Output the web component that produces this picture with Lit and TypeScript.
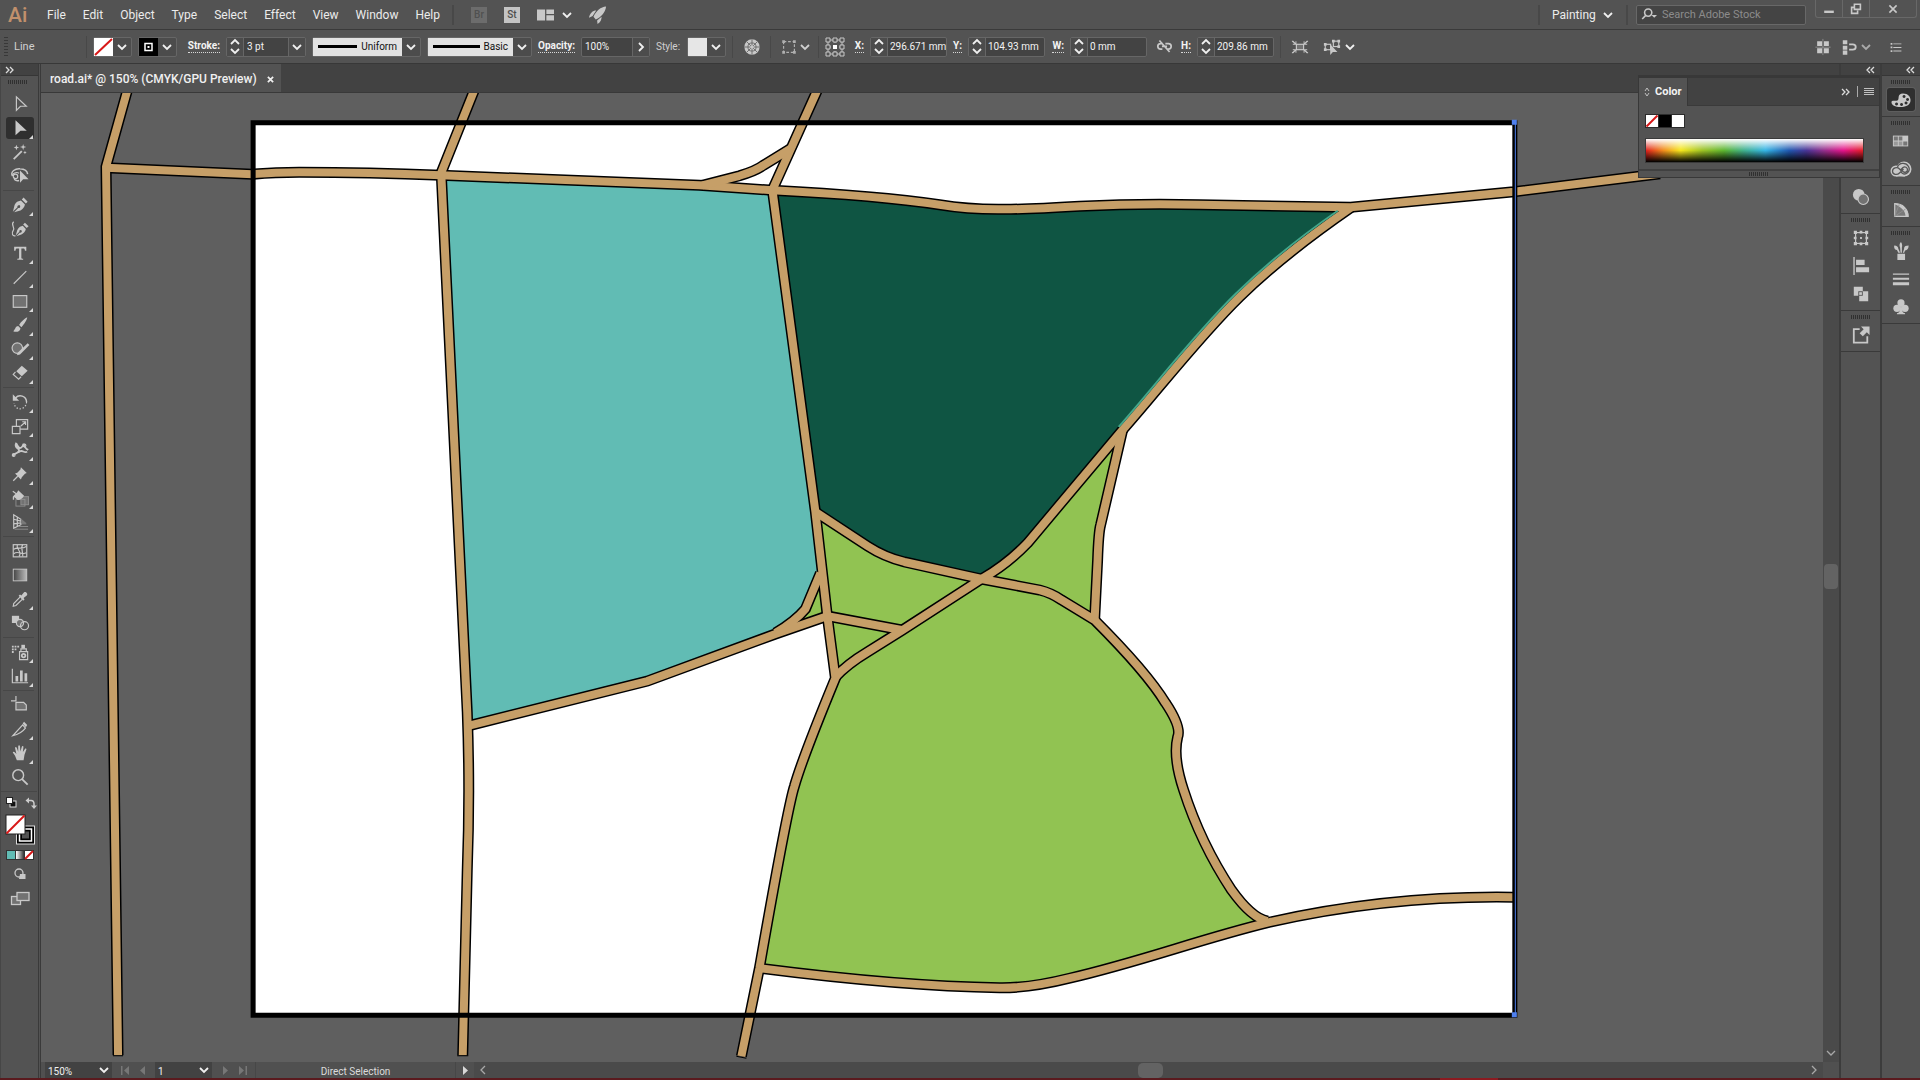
import { LitElement, html, css, svg, TemplateResult, SVGTemplateResult } from "lit";
import { customElement, property } from "lit/decorators.js";
import { classMap } from "lit/directives/class-map.js";

/* ---------- icon drawings, each on a 20 x 20 grid ---------- */

const ICONS: Record<string, SVGTemplateResult> = {
  select: svg`<path class="l" d="M6 2V17L10.500 12.500H17Z"/>`,
  direct: svg`<path class="f" d="M5 1.500V18L10.500 13H17.500Z"/>`,
  wand: svg`<path class="l w2" d="M3 18L12 9"/><path class="f" d="M6 2l.8 2.200L9 5l-2.200.8L6 8l-.8-2.200L3 5l2.200-.8ZM13.500 1l.8 2.700L17 4.500l-2.700.8L13.500 8l-.8-2.700L10 4.500l2.700-.8ZM15.500 8.500l.6 1.400 1.400.6-1.400.6-.6 1.400-.6-1.400-1.400-.6 1.400-.6Z"/>`,
  lasso: svg`<path class="l w15" d="M9 15C4 16 3 13 4.500 12M1.500 10C-1 5 5 1.500 10 2C14 2.200 18 4 18.500 8"/><path class="l" d="M2 10C1 7 6 5 9 7"/><circle class="l" cx="5" cy="10.500" r="2.500"/><path class="f" d="M10 4V17.500L13.500 13.500H19.500Z"/>`,
  pen: svg`<path class="f" d="M2 18L4 10C6 6 9 5.500 11 5L15.500 9.500C15 12 13.500 14.500 10.500 16L3.500 18L8 13.200A1.600 1.600 0 1 0 7.200 12.400L2.500 17Z"/><path class="f" d="M12 3.800L14 1.800L18.500 6.300L16.500 8.300Z"/>`,
  curvature: svg`<path class="f" d="M5 18L7 11C9 7.500 11 7 13 6.500L16.500 10C16 13 14 15 11.500 16L6 18L10 13.800A1.400 1.400 0 1 0 9.300 13L5.500 17Z"/><path class="f" d="M13.500 5L15.500 3L19.500 7L17.500 9Z"/><path class="l" d="M3 2C-1 5 5 8 2.500 11.500C0 15 2 18.500 5 17.500"/>`,
  type: svg`<path class="f" d="M3.500 3H17V7.500H15.500C15.300 5.500 15 5 13.500 5H11.500V15C11.500 16.300 12 16.500 13.500 16.500V17.500H7V16.500C8.500 16.500 9 16.300 9 15V5H7C5.500 5 5.200 5.500 5 7.500H3.500Z"/>`,
  line: svg`<path class="l" d="M3 17.500L17 3.500"/>`,
  rect: svg`<rect class="l m" x="2.500" y="4" width="15" height="13"/>`,
  brush: svg`<path class="f" d="M18 1.500C15 3 11 6.500 9 10L11.500 12.500C15 9 18 4 18 1.500ZM8 11C5 11 5 14.500 2.500 17C6 18.500 10.500 17 10.500 13.500Z"/>`,
  shaper: svg`<circle class="l m" cx="7" cy="9" r="5.800"/><path class="f" d="M18.500 3.500L20.500 5.500L10 16L6.500 17L8 13.500Z"/>`,
  eraser: svg`<path class="f" d="M12 2L18.500 7.500L12 13.500L5.800 8Z"/><path class="l" d="M5 8.800L2.500 11.500L8.500 16.800L11.200 14.200"/>`,
  rotate: svg`<path class="l w15" d="M5 5.500C9 1 17 3 17.300 10"/><path class="f" d="M2 1.500V8.500H9Z"/><path class="l dot" d="M17.300 10C17 16 12 18 9 17.500C6 17 3.500 14 3.500 11"/>`,
  scale: svg`<path class="l" d="M1.500 10.500H10V18.500H1.500ZM6 10V3H18.500V13.500H10.500"/><path class="l" d="M11 10L16 5.500M12.500 5.300H16.200V9"/>`,
  width: svg`<path class="l w2" d="M6 2C2 9 12 8 8 12C5 15 2 14 2 17M6 3C10 12 13 6 14 3C15 9 17 8 19 10M8 13C12 8 14 14 18 12"/><circle class="l" cx="3" cy="15.500" r="1.500"/><circle class="l" cx="15" cy="5" r="1.500"/>`,
  pin: svg`<path class="f" d="M11 2.500L17.500 9L15.500 9.800L12 13.500L11 16L4.500 9.500L7 8.500L10.500 5Z"/><path class="l" d="M7.500 12.500L2.500 17.500"/>`,
  builder: svg`<rect class="l dim m" x="11" y="8.500" width="8.500" height="9"/><rect class="l dim" x="5.500" y="11.500" width="10" height="7.500"/><path class="f" d="M2 8.500C4 6 7 5 8 1.500L14.500 7.500C13 10.500 9 13 7 12L3.500 9V12H2Z"/><path class="l" d="M2 2.500L7 6"/>`,
  perspective: svg`<path class="l" d="M3 2V17L11 13V7ZM3 7L11 9M3 12L11 11M7 4V15"/><path class="l dim" d="M11 12H17M8 15H19M4 18H19"/><path class="m" d="M11 6L17 11H11Z"/>`,
  mesh: svg`<rect class="l" x="2.500" y="3" width="15" height="13.500"/><path class="l" d="M3 8C8 5 11 9 17 5M3 13C8 9 12 15 17 12M7 3C5 8 13 10 9 16M13 3C10 7 14 11 13 16"/>`,
  gradient: svg`<defs><linearGradient id="gt"><stop stop-color="#444"/><stop offset="1" stop-color="#bbb"/></linearGradient></defs><rect x="2.500" y="3.500" width="15" height="13" fill="url(#gt)" stroke="#c8c8c8"/>`,
  eyedropper: svg`<path class="f" d="M10 5L11.500 6L14.500 2.500C16 1 19.500 4 17.500 6L14 9L15 10.500L13.500 12L8.500 6.500Z"/><path class="l" d="M10 8L3 15L2.500 18L5.500 17.200L12.500 10.500"/>`,
  blend: svg`<rect class="f" x="1" y="2" width="8" height="8"/><circle class="l m" cx="10" cy="10" r="4"/><circle class="l" cx="15" cy="13" r="4.500"/>`,
  spray: svg`<path class="l" d="M9.500 9.500H18.500V18.500H9.500ZM11 9V6.500H17V9"/><rect class="f" x="11.500" y="2" width="4" height="4"/><circle class="l w2" cx="14" cy="14" r="2"/><path class="f" d="M1 3h2v2H1zM4 3h2v2H4zM7 3h2v2H7zM1 6h2v2H1zM4 6h2v2H4zM1 9h2v2H1z"/>`,
  graph: svg`<path class="l" d="M1.500 2V17.500H19"/><path class="f" d="M5 10H8V16H5ZM10 4H13V16H10ZM15 7H18V16H15Z"/>`,
  artboard: svg`<path class="l" d="M5.500 0V6M0 5.500H5"/><path class="l m" d="M5.500 7H14L17 10V15.500H5.500Z"/>`,
  slice: svg`<path class="l" d="M2 17.500L13 5.500L16 9C13 13 8 16 2 17.500Z"/><path class="f" d="M13 4L14.500 2L18 5.500L16.500 8Z"/>`,
  hand: svg`<path class="f" d="M6.500 18L4.500 13L2 9.500C2 8 3.500 8.300 4.500 9.500L6 11L4.500 4.500C4.500 3 6 3 6.500 4.500L8 8.500L8 2.500C8.200 1 9.800 1 10 2.500L10.500 8.300L12 3C12.500 1.700 14 2 13.800 3.500L13.200 9L15.500 5.500C16.500 4.500 17.500 5.500 17 6.500L15 12L14 18Z"/>`,
  zoom: svg`<circle class="l w15" cx="8" cy="8" r="6"/><path class="l w2" d="M12 12L18.500 18.500"/>`,
  drawmode: svg`<circle class="l" cx="9" cy="9" r="4"/><path class="f" d="M10 10H15.500V15H9Z"/>`,
  screen: svg`<rect class="l m" x="1.500" y="8.500" width="9" height="8"/><rect class="l m" x="7" y="4.500" width="12" height="8"/>`,
  palette: svg`<path class="f" fill-rule="evenodd" d="M12 3.500C17 3.500 20 7 19.500 11C19 15.500 14 17 9.500 17C4.500 17 0 15 .5 12C1 9.500 5 12 7 10C8.500 8 6 4 12 3.500ZM13 5a1.500 1.500 0 1 0 .1 0ZM16.500 8a1.500 1.500 0 1 0 .1 0ZM15 11.500a1.500 1.500 0 1 0 .1 0ZM10.500 13a1.500 1.500 0 1 0 .1 0ZM5.500 12.500a1.500 1.500 0 1 0 .1 0Z"/>`,
  swatches: svg`<rect class="f" x="1" y="4" width="17" height="12"/><path fill="#777" d="M2 5h4.500v4.500H2zM7.500 5h4v4.500h-4zM12.500 10.500h4.500v4.500h-4.500z"/><path fill="#999" d="M2 10.500h4.500v4.500H2zM7.500 10.500h4v4.500h-4z"/>`,
  cloud: svg`<circle class="f" cx="5" cy="12" r="5.500"/><circle class="f" cx="13" cy="10" r="7.500"/><rect class="f" x="5" y="13" width="9" height="4.500"/><path fill="none" stroke="#555" stroke-width="1.300" d="M11 12.500L8.500 10C6 7.500 1.500 9 1.500 12.200C1.500 15.500 6 16.500 8.500 14L12.500 10M6.500 8C8 3.500 15 3 17.500 7.500C20 12 15 17 11 14L9.500 12.500M9.500 11L12 8.500C14 7 16.500 8.500 16.500 10.700C16.500 13 13.500 14 12 12.500L10 10.500"/>`,
  guide: svg`<path class="m" d="M3 3V17H18C18 9 12 3 3 3Z"/><path class="f" d="M3 3C12 3 18 9 18 17H15C15 12 12 8 3 3Z"/><path class="l" d="M3 3V17H18C18 9 12 3 3 3Z"/><path class="l dim" d="M3 17L8 4M3 17L15 9"/>`,
  brushes: svg`<path class="f" d="M6 13H14.500V20H6ZM9.500 12L9 6C7.500 3 9 1 10 0C11.500 2 11.500 4 11 6L11 12ZM7 12L5.500 9C3 8.500 2 6.500 2.500 4C5.500 4 7 5.500 7 7.500L9 12ZM12 12L13.500 7.500C13 5 15.500 4 18.500 4C18.500 7 17 9.500 14.500 9.500L13.500 12Z"/>`,
  strokes: svg`<path class="f" d="M1 4H19V5.200H1ZM1 8.500H19V10.800H1ZM1 13.500H19V17H1Z"/>`,
  club: svg`<circle class="f" cx="10" cy="5.500" r="4"/><circle class="f" cx="5.500" cy="11.500" r="4"/><circle class="f" cx="14.500" cy="11.500" r="4"/><path class="f" d="M9 9H11C11 15 12 16.500 14.500 17V18H5.500V17C8 16.500 9 15 9 9Z"/>`,
  transparency: svg`<circle class="f" cx="7.500" cy="7.500" r="6.500"/><circle class="l m" cx="12.500" cy="12.500" r="5.800"/>`,
  transform: svg`<rect class="l" x="4" y="4" width="12" height="12"/><path class="f" d="M2 2h3.500v3.500H2zM8.500 2h3v3h-3zM14.500 2H18v3.500h-3.500zM2 8.500h3v3H2zM15 8.500h3v3h-3zM2 14.500h3.500V18H2zM8.500 15h3v3h-3zM14.500 14.500H18V18h-3.500zM9 9h2v2H9z"/>`,
  align: svg`<path class="f" d="M1.500 0H3V20H1.500ZM4.500 3H14V9H4.500ZM4.500 11.500H19V17H4.500Z"/>`,
  pathfinder: svg`<path class="f" fill-rule="evenodd" d="M2 2H12V7H18V18H8V12H2ZM7 7V12H12V7Z"/><rect class="f" x="8" y="8" width="3" height="3"/>`,
  export: svg`<path class="l w2" d="M8.500 3.500H2V18.500H17V11.500"/><path class="f" d="M10 0.500H19.500V10L16.500 7L12 11.500L8.500 8L13 3.500Z"/>`,
  recolor: svg`<circle class="f" cx="10" cy="10" r="8.500"/><path fill="none" stroke="#666" d="M10 1.500V18.500M1.500 10H18.500M4 4L16 16M16 4L4 16"/><circle cx="10" cy="10" r="4.500" fill="none" stroke="#666"/><circle class="f" cx="10" cy="10" r="2"/>`,
  refpoint: svg`<g fill="none" stroke="#c8c8c8"><path d="M5 3H8M12 3H15M5 10H6M14 10H15M5 17H8M12 17H15M3 5V8M3 12V15M10 5V6M17 5V8M17 12V15M10 14V15"/><path d="M1 1h4v4H1zM8 1h4v4H8zM15 1h4v4h-4zM1 8h4v4H1zM15 8h4v4h-4zM1 15h4v4H1zM8 15h4v4H8zM15 15h4v4h-4z"/></g><rect x="8" y="8" width="4" height="4" fill="#fff"/>`,
  unlink: svg`<path class="l w2" d="M8 6.500H5.500C1 6.500 1 13 5.500 13H7.500M11 6.500H14.500C19 6.500 19 13 14.500 13H13M7 9.800H13M4 3L16 16.500"/>`,
  isolate: svg`<rect class="l m" x="6" y="7" width="8" height="6"/><path class="f" d="M1 3L5 7M1 3h1.500L5 5.500V3.500h1V7.500H2v-1H4L1 4ZM19 3h-1.500L15 5.500V3.500h-1V7.500H18v-1H16L19 4ZM1 17h1.500L5 14.500V16.500h1V12.500H2v1H4L1 16ZM19 17h-1.500L15 14.500V16.500h-1V12.500H18v1H16L19 16Z"/>`,
  similar: svg`<rect class="l" x="2.500" y="7" width="6" height="6"/><rect class="l" x="11.500" y="3.500" width="6" height="6"/><path class="f" d="M1 5.500h3v3H1zM1 11.500h3v3H1zM16 2h3v3h-3zM10 2h3v3h-3zM16 8h3v3h-3zM8 7V19L11 15.500H16Z"/>`,
  grid: svg`<path class="f" d="M3.500 3.500H9V9H3.500zM11 3.500h5.500V9H11zM3.500 11.500H9V17H3.500zM11 11.500h5.500V17H11z"/><path class="l dim" d="M1.500 10.200H18.500M9.900 1V19"/>`,
  snap: svg`<path class="f" d="M2 2.500h5v4.500H2zM2 8.500h5v4.500H2zM2 14h5v4.500H2z"/><path class="l w2" d="M9 7H13C17.500 7 17.500 13 13 13H9"/>`,
  list: svg`<path class="f" d="M4 5.500h2v2H4zM4 9.500h2v2H4zM4 13.500h2v2H4zM7 6h9v1H7zM7 10h9v1H7zM7 14h9v1H7z"/>`,
  layout: svg`<path class="f" d="M0 4H9.500V17H0ZM11 4H20V9.500H11ZM11 11H20V17H11Z"/>`,
  rocket: svg`<path class="f" d="M19 .5C13 1 8 5 5 12L7.500 15C14 12 18 7 19 .5ZM8 5C4 5 1 8 0 13L4 11ZM9 16L14 12C14 15 13 18 9.500 20Z"/>`,
  search: svg`<circle class="l w2" cx="9" cy="7" r="4.500"/><path class="l w2" d="M6 10.500L1.500 15"/><path class="f" d="M13 10H20L16.500 13.500Z"/>`,
  minimize: svg`<rect class="f" x="4" y="12" width="12" height="3"/>`,
  restore: svg`<path class="l w2" d="M8 4H15.500V10.500H8ZM7.500 8H4.500V15.500H12V12"/>`,
  close: svg`<path class="l w2" d="M5.500 5.500L14.500 14.500M14.500 5.500L5.500 14.500"/>`,
  bounds: svg`<rect class="l" x="4" y="4" width="12" height="12" stroke-dasharray="3 2"/><path class="f" d="M2.500 2.500h3v3h-3zM14.500 2.500h3v3h-3zM2.500 14.500h3v3h-3zM14.500 14.500h3v3h-3z"/>`,
};

const icon = (name: string, size = 20): TemplateResult =>
  html`<svg class="icon" viewBox="0 0 20 20" width=${size} height=${size} aria-hidden="true">${ICONS[name]}</svg>`;

const chevron = (dir: "down" | "up" | "left" | "right" = "down"): TemplateResult => {
  const d = {
    down: "M1 3L5 7L9 3",
    up: "M1 7L5 3L9 7",
    left: "M7 1L3 5L7 9",
    right: "M3 1L7 5L3 9",
  }[dir];
  return html`<svg class="chev" viewBox="0 0 10 10" width="10" height="10" aria-hidden="true"><path d=${d} /></svg>`;
};

const double = (dir: "left" | "right"): TemplateResult =>
  html`<svg class="dbl" viewBox="0 0 10 8" width="10" height="8" aria-hidden="true">
    <path d=${dir === "right" ? "M1 1L4 4L1 7M5 1L8 4L5 7" : "M4 1L1 4L4 7M8 1L5 4L8 7"} />
  </svg>`;

const iconStyles = css`
  .icon { display: block; flex: none; overflow: visible; }
  .icon .f { fill: #c8c8c8; }
  .icon .m { fill: #7a7a7a; }
  .icon .l { stroke: #c8c8c8; stroke-width: 1.3; fill: none; }
  .icon .l.m { fill: #727272; }
  .icon .w15 { stroke-width: 1.6; }
  .icon .w2 { stroke-width: 2; }
  .icon .dim { stroke: #909090; stroke-width: 1; }
  .icon .dot { stroke-dasharray: 1.5 2; }
  .chev { display: block; flex: none; fill: none; stroke: #f0f0f0; stroke-width: 1.8; }
  .dbl { display: block; fill: none; stroke: #dcdcdc; stroke-width: 1.3; }
  button, select, input {
    font: inherit; color: inherit; background: none; border: 0; padding: 0; margin: 0;
    border-radius: 0; appearance: none; outline: none; min-width: 0;
  }
  button { display: flex; align-items: center; justify-content: center; }
  .grip { height: 4px; width: 20px; background: repeating-linear-gradient(90deg, #303030 0 1px, #535353 1px 2px); }
`;

/* ---------- menu bar ---------- */

@customElement("menu-bar")
export class MenuBar extends LitElement {
  static styles = [iconStyles, css`
    :host { display: flex; align-items: center; background: #535353; border-bottom: 1px solid #3a3a3a; color: #ececec; font-size: 12px; }
    .brand { color: #c1906c; font-size: 21px; line-height: 26px; font-weight: 500; width: 39px; padding-left: 8px; }
    .menus { display: flex; gap: 17px; }
    .sep { width: 2px; height: 20px; background: #484848; }
    .badge { width: 16px; height: 16px; font-size: 10px; font-weight: 500; background: #c4c4c4; color: #4e4e4e; }
    .badge.off { background: #6c6c6c; color: #505050; }
    .apps { display: flex; align-items: center; gap: 17px; padding-left: 12px; }
    .arrange { gap: 8px; }
    .right { display: flex; align-items: center; margin-left: auto; align-self: stretch; }
    .space { display: grid; grid-template-columns: 1fr 10px; align-items: center; width: 61px; margin: 0 13px 0 12px; }
    .space select { grid-area: 1 / 1 / 2 / 3; }
    .space .chev { grid-area: 1 / 2; pointer-events: none; }
    .search { display: flex; align-items: center; gap: 5px; width: 164px; height: 18px; padding-left: 4px; margin: 0 9px 0 8px; background: #444; border: 1px solid #686868; border-radius: 2px; }
    .search input { flex: 1; font-size: 11px; }
    .search input::placeholder { color: #8c8c8c; opacity: 1; }
    .window { display: flex; align-self: flex-start; border: 1px solid #686868; border-top: 0; border-radius: 0 0 3px 3px; margin-right: 3px; }
    .window button { width: 27px; height: 17px; border-right: 1px solid #686868; }
    .window button:last-child { width: 46px; border-right: 0; }
  `];

  render() {
    const menus = ["File", "Edit", "Object", "Type", "Select", "Effect", "View", "Window", "Help"];
    return html`
      <span class="brand">Ai</span>
      <nav class="menus">${menus.map((m) => html`<button>${m}</button>`)}</nav>
      <div class="apps">
        <span class="sep"></span>
        <button class="badge off">Br</button>
        <button class="badge">St</button>
        <button class="arrange" aria-label="Arrange documents">${icon("layout", 17)}${chevron()}</button>
        <button aria-label="GPU performance">${icon("rocket", 18)}</button>
      </div>
      <div class="right">
        <span class="sep"></span>
        <span class="space">
          <select aria-label="Workspace"><option>Painting</option></select>${chevron()}
        </span>
        <span class="sep"></span>
        <label class="search">${icon("search", 16)}<input type="search" aria-label="Search Adobe Stock" placeholder="Search Adobe Stock" /></label>
        <div class="window">
          <button aria-label="Minimize">${icon("minimize", 16)}</button>
          <button aria-label="Restore">${icon("restore", 16)}</button>
          <button aria-label="Close">${icon("close", 16)}</button>
        </div>
      </div>
    `;
  }
}

/* ---------- control bar ---------- */

@customElement("control-bar")
export class ControlBar extends LitElement {
  static styles = [iconStyles, css`
    :host { display: flex; align-items: center; gap: 6px; padding: 0 15px 0 4px; background: #535353; border-bottom: 1px solid #383838; color: #f2f2f2; font-size: 10px; }
    .vgrip { width: 4px; height: 20px; background: repeating-linear-gradient(#383838 0 1px, #535353 1px 3px); }
    .object { width: 66px; color: #d0d0d0; font-size: 11px; }
    .sep { width: 1px; height: 22px; background: #484848; }
    .combo { display: grid; grid-template-columns: 1fr 18px; height: 20px; box-sizing: border-box; border: 1px solid #666; border-radius: 2px; background: #4c4c4c; align-items: center; }
    .combo > .chev { grid-area: 1 / 2; justify-self: center; pointer-events: none; }
    .combo > select { grid-area: 1 / 1 / 2 / 3; height: 18px; }
    .swatch { width: 39px; }
    .chip { grid-area: 1 / 1; height: 18px; background: #e6e6e6; display: block; width: 100%; }
    .hot { font-weight: 700; border-bottom: 1px dotted #d8d8d8; line-height: 12px; color: #f2f2f2; }
    .cell { display: flex; justify-content: flex-end; }
    .w-label { width: 37px; }
    .w-axis { width: 13px; }
    .w-slim { width: 9px; }
    .style { width: 25px; color: #d0d0d0; }
    .field { display: flex; height: 20px; box-sizing: border-box; border: 1px solid #666; border-radius: 2px; background: #434343; }
    .field input { flex: 1; padding-left: 3px; }
    .field.num { width: 77px; }
    .field.num input { padding-left: 2px; }
    .field.weight { width: 80px; }
    .field.opacity { width: 69px; }
    .spin { display: flex; flex-direction: column; justify-content: center; width: 17px; box-sizing: border-box; background: #4c4c4c; border-right: 1px solid #666; }
    .spin button { height: 9px; }
    .more { width: 17px; border-left: 1px solid #666; background: #4c4c4c; }
    .profile { width: 109px; }
    .brush { width: 105px; }
    .face { grid-area: 1 / 1; display: flex; align-items: center; gap: 4px; height: 18px; padding: 0 5px; background: #e2e2e2; color: #111; }
    .face::before { content: ""; flex: 1; height: 3px; background: #000; }
    .face + select { opacity: 0; }
    .box { display: flex; justify-content: center; }
    .b25 { width: 25px; }
    .b23 { width: 23px; }
    .b35 { width: 35px; gap: 2px; }
    .b42 { width: 42px; gap: 4px; }
    .faded { opacity: 0.55; }
    .soft { opacity: 0.8; }
    .right { display: flex; align-items: center; gap: 9px; margin-left: auto; }
    .snap { gap: 2px; padding-right: 7px; }
  `];

  private coord(label: string, id: string, value: string, width: string) {
    return html`
      <span class="cell ${width}"><label class="hot" for=${id}>${label}</label></span>
      <span class="field num">
        <span class="spin">
          <button aria-label="Increase ${label}">${chevron("up")}</button>
          <button aria-label="Decrease ${label}">${chevron("down")}</button>
        </span>
        <input id=${id} .value=${value} />
      </span>`;
  }

  render() {
    return html`
      <span class="vgrip"></span>
      <span class="object">Line</span>
      <span class="sep"></span>
      <button class="combo swatch" aria-label="Fill">
        <svg class="chip" viewBox="0 0 19 18"><rect width="19" height="18" fill="#fff" /><path d="M1 17L18 1" stroke="#d81818" stroke-width="2" /></svg>
        ${chevron()}
      </button>
      <button class="combo swatch" aria-label="Stroke colour">
        <svg class="chip" viewBox="0 0 19 18"><rect width="19" height="18" /><rect x="6" y="5.500" width="7" height="7" fill="#000" stroke="#fff" stroke-width="1.500" /><rect x="8.500" y="8" width="2" height="2" fill="#fff" /></svg>
        ${chevron()}
      </button>
      <span class="cell w-label"><label class="hot" for="weight">Stroke:</label></span>
      <span class="field weight">
        <span class="spin">
          <button aria-label="Increase stroke">${chevron("up")}</button>
          <button aria-label="Decrease stroke">${chevron("down")}</button>
        </span>
        <input id="weight" .value=${"3 pt"} />
        <button class="more" aria-label="Stroke presets">${chevron()}</button>
      </span>
      <span class="combo profile"><span class="face">Uniform</span><select aria-label="Width profile"><option>Uniform</option></select>${chevron()}</span>
      <span class="combo brush"><span class="face">Basic</span><select aria-label="Brush"><option>Basic</option></select>${chevron()}</span>
      <span class="cell w-label"><label class="hot" for="opacity">Opacity:</label></span>
      <span class="field opacity">
        <input id="opacity" .value=${"100%"} />
        <button class="more" aria-label="Opacity slider">${chevron("right")}</button>
      </span>
      <span class="style">Style:</span>
      <button class="combo swatch" aria-label="Graphic style"><span class="chip"></span>${chevron()}</button>
      <span class="sep"></span>
      <button class="box b25" aria-label="Recolor artwork">${icon("recolor", 18)}</button>
      <span class="sep"></span>
      <button class="box b35 soft" aria-label="Align to">${icon("bounds", 18)}${chevron()}</button>
      <span class="sep"></span>
      <button aria-label="Reference point">${icon("refpoint")}</button>
      ${this.coord("X:", "x", "296.671 mm", "w-axis")}
      ${this.coord("Y:", "y", "104.93 mm", "w-slim")}
      ${this.coord("W:", "w", "0 mm", "w-axis")}
      <button class="box b23" aria-label="Constrain proportions">${icon("unlink", 17)}</button>
      ${this.coord("H:", "h", "209.86 mm", "w-slim")}
      <span class="sep"></span>
      <button class="box b25" aria-label="Isolate selected object">${icon("isolate", 18)}</button>
      <button class="box b42" aria-label="Select similar objects">${icon("similar", 18)}${chevron()}</button>
      <div class="right">
        <button aria-label="Align to pixel grid">${icon("grid", 18)}</button>
        <button class="snap" aria-label="Snap options">${icon("snap", 18)}<span class="faded">${chevron()}</span></button>
        <button aria-label="Panel options">${icon("list", 18)}</button>
      </div>
    `;
  }
}

/* ---------- tool panel ---------- */

const TOOL_GROUPS: string[][] = [
  ["select", "direct+", "wand", "lasso"],
  ["pen+", "curvature", "type+", "line+", "rect+", "brush+", "shaper+", "eraser+"],
  ["rotate+", "scale+", "width+", "pin+", "builder+", "perspective+"],
  ["mesh", "gradient", "eyedropper+", "blend"],
  ["spray+", "graph+"],
  ["artboard", "slice+", "hand+", "zoom"],
];

@customElement("tool-panel")
export class ToolPanel extends LitElement {
  static styles = [iconStyles, css`
    :host { display: flex; flex-direction: column; background: #535353; border-right: 1px solid #3a3a3a; border-left: 1px solid #464646; }
    .head { height: 11px; background: #424242; border-bottom: 1px solid #363636; display: flex; align-items: center; padding-left: 4px; }
    .grip { margin: 4px auto 8px 7px; }
    .group { display: flex; flex-direction: column; padding-left: 5px; }
    .group + .group::before { content: ""; height: 1px; margin: 2px 4px 2px -3px; background: #474747; }
    .tool { position: relative; width: 28px; height: 24px; }
    .tool.on::before { content: ""; position: absolute; inset: 1px 0; background: #2f2f2f; border-radius: 3px; }
    .tool .icon { position: relative; }
    .more::after { content: ""; position: absolute; right: 1px; bottom: 1px; border: 2px solid; border-color: transparent #d8d8d8 #d8d8d8 transparent; }
    .colors { display: block; margin-top: 2px; padding-left: 4px; border-top: 1px solid #474747; }
    .tail { display: flex; flex-direction: column; padding-left: 5px; }
  `];

  render() {
    return html`
      <div class="head">${double("right")}</div>
      <div class="grip"></div>
      ${TOOL_GROUPS.map((group) => html`<div class="group">${group.map((entry) => {
        const more = entry.endsWith("+");
        const name = entry.replace("+", "");
        return html`<button class=${classMap({ tool: true, more, on: name === "direct" })} aria-label=${name}>${icon(name, 18)}</button>`;
      })}</div>`)}
      <svg class="colors" viewBox="0 0 32 70" width="32" height="70" aria-label="Fill and stroke">
        <g>
          <rect x="5" y="9" width="6" height="6" fill="#111" stroke="#ddd" />
          <rect x="1.500" y="5.500" width="6" height="6" fill="#fff" stroke="#222" />
          <path d="M24 8.500H26Q29 8.500 29 12V14" fill="none" stroke="#ccc" stroke-width="1.500" />
          <path d="M24 5.500V11.500L20.500 8.500ZM26 13.500H32L29 17Z" fill="#ccc" />
          <rect x="11.500" y="34" width="18" height="18" fill="#000" stroke="#ddd" />
          <rect x="14.500" y="37" width="12" height="12" fill="#000" stroke="#fff" stroke-width="1.500" />
          <rect x="17" y="39.500" width="7" height="7" fill="#535353" />
          <rect x="1" y="23" width="19" height="19" fill="#fff" stroke="#222" />
          <path d="M1.500 41.500L19.500 23.500" stroke="#d81818" stroke-width="2" />
        </g>
        <defs><linearGradient id="g"><stop stop-color="#fff" /><stop offset="1" stop-color="#333" /></linearGradient></defs>
        <rect x="1" y="58" width="28" height="10" fill="#333" />
        <rect x="2" y="59" width="8" height="8" fill="#61bcb4" />
        <rect x="11" y="59" width="8" height="8" fill="url(#g)" />
        <rect x="20" y="59" width="8" height="8" fill="#fff" />
        <path d="M20 67L28 59" stroke="#d81818" stroke-width="2" />
      </svg>
      <div class="tail">
        <button class="tool" aria-label="Drawing mode">${icon("drawmode")}</button>
        <button class="tool" aria-label="Screen mode">${icon("screen")}</button>
      </div>
    `;
  }
}

/* ---------- artwork ---------- */

const ROADS = [
  "M129 88L107 167L119 1055",
  "M107 168L253 174.500Q275 172.500 300 172.500Q370 172.500 442 175.500L700 185.500L773 190.500Q880 196 940 205Q970 210 1005 209.500Q1030 209.500 1080 206.500Q1140 203.500 1200 205L1351 207.500L1514 192L1660 174",
  "M476 88L442 173L468 712Q471 790 468 870L463.500 1055",
  "M819 88L773 190L816 512L828 617L836 678Q803 758 795 786Q788 808 760 968L742 1056",
  "M791 149L764 165.500Q757 171 740 176L703 185.500",
  "M468 726L648 681L776 634L828 616L902 630",
  "M821 573L806 609Q796 621 776 633",
  "M816 512L868 546Q885 557 905 562L982 579L1040 590Q1052 593 1062 600L1095 620C1130 655 1152 680 1166 703Q1182 727 1178 737Q1173 757 1184 790Q1201 843 1232 890Q1252 918 1268 921",
  "M836 677Q848 664 868 652L903 630L982 579Q1008 564 1028 543L1123 430C1160 388 1200 336 1240 297Q1283 255 1351 208",
  "M1123 430L1101 525Q1099 532 1098 560L1095 620",
  "M760 968Q900 986 1000 987.500Q1030 988 1070 978C1140 962 1200 939 1270 922Q1390 895 1514 897",
];

@customElement("art-board")
export class ArtBoard extends LitElement {
  static styles = css`
    :host { display: block; min-width: 0; min-height: 0; background: #5f5f5f; overflow: hidden; }
    svg { display: block; width: 100%; height: 100%; }
    .casing { fill: none; stroke: #000; stroke-width: 11; }
    .surface { fill: none; stroke: #c69f68; stroke-width: 8; }
  `;

  render() {
    return html`<svg viewBox="42 93 1781 969" preserveAspectRatio="xMidYMid slice" role="img" aria-label="Road map artwork">
      <rect x="254" y="123" width="1261" height="892" fill="#fff" />
      <path fill="#61bcb4" d="M442 175.500L700 185.500L773 190.500L816 512L822 573L806 609Q796 621 776 633L648 681L468 725Z" />
      <path fill="#0f5543" d="M773 190.500Q880 196 940 204.500Q970 210 1005 209Q1030 209 1080 206Q1140 203 1200 204.500L1351 207.500Q1283 255 1240 297C1200 336 1160 388 1123 430L1028 543Q1008 564 982 579L905 562Q885 557 868 546L816 512Z" />
      <path fill="#91c352" d="M816 512L868 546Q885 557 905 562L982 579Q1008 564 1028 543L1123 430L1101 525Q1099 532 1098 560L1095 620C1130 655 1152 680 1166 703Q1182 727 1178 737Q1173 757 1184 790Q1201 843 1232 890Q1252 918 1268 921C1200 937 1140 962 1070 978Q1030 988 1000 987.500Q900 986 760 968Q788 808 795 786Q803 758 836 678L828 617L778 632L806 609L821 573Z" />
      ${ROADS.map((d) => svg`<path class="casing" d=${d} />`)}
      ${ROADS.map((d) => svg`<path class="surface" d=${d} />`)}
      <path fill="none" stroke="#43a88c" stroke-width="2" d="M1119 427C1156 385 1196 333 1236 294Q1279 252 1338 211" />
      <path fill="none" stroke="#000" d="M114 1055.500H124M458 1055.500H469M737 1056L747 1058" />
      <rect x="254" y="123" width="1261" height="892" fill="none" stroke="#000" stroke-width="5" />
      <path stroke="#4f80ee" d="M1515.500 123V1015" />
      <path fill="#4f80ee" d="M1512 120h5v5h-5zM1512 1012h5v5h-5z" />
    </svg>`;
  }
}

/* ---------- document window ---------- */

@customElement("document-window")
export class DocumentWindow extends LitElement {
  static styles = [iconStyles, css`
    :host { display: grid; grid-template-rows: 29px minmax(0, 1fr) 16px; min-width: 0; min-height: 0; border-left: 1px solid #3a3a3a; color: #f0f0f0; }
    .tabs { display: flex; background: #424242; border-bottom: 1px solid #393939; }
    .tab { display: flex; align-items: center; justify-content: space-between; width: 240px; box-sizing: border-box; padding: 2px 7px 0 9px; background: #535353; font-size: 12px; font-weight: 500; white-space: nowrap; }
    .tab svg { display: block; fill: none; stroke: #f0f0f0; stroke-width: 2; }
    .view { display: grid; grid-template-columns: minmax(0, 1fr) 16px; min-height: 0; }
    .vscroll { display: flex; flex-direction: column; align-items: center; background: #4a4a4a; padding-bottom: 4px; }
    .vthumb { width: 14px; height: 25px; border-radius: 4px; background: #636363; }
    .up { flex: 465; }
    .down { flex: 453; }
    .vscroll .chev, .hscroll .chev { stroke: #a8a8a8; stroke-width: 1.3; }
    .status { display: flex; align-items: stretch; background: #505050; font-size: 10px; padding-left: 4px; }
    .combo { display: grid; grid-template-columns: 1fr 17px; align-items: center; background: #424242; }
    .combo select { grid-area: 1 / 1 / 2 / 3; padding: 2px 3px 0; }
    .combo .chev { grid-area: 1 / 2; justify-self: center; pointer-events: none; }
    .zoom { width: 67px; }
    .page { width: 57px; }
    .jump { display: flex; gap: 8px; width: 43px; justify-content: center; }
    .jump svg { display: block; fill: #777; }
    .name { width: 199px; text-align: center; color: #dcdcdc; border: 1px solid #474747; border-width: 0 1px; line-height: 19px; overflow: hidden; }
    .play { width: 18px; }
    .play svg { fill: #d8d8d8; }
    .hscroll { flex: 1; display: flex; align-items: center; background: #4a4a4a; padding: 0 4px; }
    .hthumb { width: 25px; height: 15px; border-radius: 5px; background: #636363; }
    .left { flex: 655; }
    .rest { flex: 650; }
    .corner { width: 16px; }
  `];

  render() {
    return html`
      <div class="tabs">
        <div class="tab">road.ai* @ 150% (CMYK/GPU Preview)
          <button aria-label="Close document"><svg viewBox="0 0 8 8" width="7" height="7"><path d="M1 1L7 7M7 1L1 7" /></svg></button>
        </div>
      </div>
      <div class="view">
        <art-board></art-board>
        <div class="vscroll"><span class="up"></span><span class="vthumb"></span><span class="down"></span>${chevron("down")}</div>
      </div>
      <div class="status">
        <span class="combo zoom"><select aria-label="Zoom"><option>150%</option></select>${chevron()}</span>
        <span class="jump">
          <button aria-label="First artboard"><svg viewBox="0 0 9 9" width="9" height="9"><path d="M0 0H1.500V9H0ZM8 0V9L3 4.500Z" /></svg></button>
          <button aria-label="Previous artboard"><svg viewBox="0 0 9 9" width="9" height="9"><path d="M7 0V9L2 4.500Z" /></svg></button>
        </span>
        <span class="combo page"><select aria-label="Artboard"><option>1</option></select>${chevron()}</span>
        <span class="jump">
          <button aria-label="Next artboard"><svg viewBox="0 0 9 9" width="9" height="9"><path d="M2 0V9L7 4.500Z" /></svg></button>
          <button aria-label="Last artboard"><svg viewBox="0 0 9 9" width="9" height="9"><path d="M7.500 0H9V9H7.500ZM1 0V9L6 4.500Z" /></svg></button>
        </span>
        <span class="name">Direct Selection</span>
        <button class="play" aria-label="Status options"><svg viewBox="0 0 9 9" width="9" height="9"><path d="M2 0V9L7 4.500Z" /></svg></button>
        <div class="hscroll">${chevron("left")}<span class="left"></span><span class="hthumb"></span><span class="rest"></span>${chevron("right")}</div>
        <span class="corner"></span>
      </div>
    `;
  }
}

/* ---------- collapsed panel dock ---------- */

@customElement("panel-dock")
export class PanelDock extends LitElement {
  @property({ attribute: false }) groups: string[][] = [];

  static styles = [iconStyles, css`
    :host { display: flex; flex-direction: column; background: #535353; border-left: 2px solid #3c3c3c; }
    .head { height: 11px; background: #424242; border-bottom: 1px solid #363636; display: flex; align-items: center; justify-content: flex-end; padding-right: 4px; }
    .group { display: flex; flex-direction: column; align-items: center; padding: 4px 0 2px; border-bottom: 1px solid #3a3a3a; }
    .grip { margin-bottom: 2px; }
    .group button { width: 28px; height: 28px; }
    .group button.on { height: 23px; margin: 2px 0 3px; background: #2f2f2f; border-radius: 3px; box-shadow: 0 0 0 1px #5e5e5e; }
  `];

  render() {
    return html`
      <div class="head">${double("left")}</div>
      ${this.groups.map((g) => html`<div class="group"><div class="grip"></div>${g.map((name) =>
        html`<button class=${classMap({ on: name === "palette" })} aria-label=${name}>${icon(name, name === "cloud" || name === "palette" ? 20 : 18)}</button>`)}</div>`)}
    `;
  }
}

/* ---------- floating color panel ---------- */

@customElement("color-panel")
export class ColorPanel extends LitElement {
  static styles = [iconStyles, css`
    :host { display: block; background: #535353; border: 1px solid #383838; border-top: 3px solid #383838; color: #f2f2f2; font-size: 11px; }
    .head { display: flex; align-items: center; height: 27px; background: #424242; border-bottom: 1px solid #3a3a3a; padding-right: 5px; gap: 6px; }
    .tab { display: flex; align-items: center; gap: 5px; width: 49px; box-sizing: border-box; height: 28px; padding-left: 5px; background: #535353; border-right: 1px solid #383838; font-weight: 700; margin-right: auto; }
    .tab svg, .menu svg { fill: none; stroke: #c0c0c0; display: block; }
    .bar { width: 1px; height: 11px; background: #aaa; }
    .body { display: flex; flex-direction: column; gap: 10px; padding: 8px 15px 6px 6px; }
    .chips { display: flex; }
    .chips svg { display: block; }
    .spectrum {
      height: 23px; border: 1px solid #3a3a3a;
      background:
        linear-gradient(#fff, #fff0 50%, #0000 50%, #000),
        linear-gradient(90deg, #e0201e, #f08c1c 8%, #f5e61c 16%, #9cc224 26%, #5cb531 36%, #41b08c 45%, #35b4e4 55%, #2158b0 66%, #4a3596 74%, #94308c 82%, #e4148a 91%, #e21f26);
    }
    .foot { display: flex; justify-content: center; align-items: center; height: 6px; border-top: 2px solid #404040; }
  `];

  render() {
    return html`
      <div class="head">
        <div class="tab"><svg viewBox="0 0 6 10" width="6" height="10"><path d="M1 4L3 1L5 4M1 6L3 9L5 6" /></svg>Color</div>
        <button aria-label="Collapse">${double("right")}</button>
        <span class="bar"></span>
        <button class="menu" aria-label="Color panel menu"><svg viewBox="0 0 10 10" width="10" height="10"><path d="M0 1.500H10M0 3.500H10M0 5.500H10M0 7.500H10" /></svg></button>
      </div>
      <div class="body">
        <div class="chips">
          <svg viewBox="0 0 40 14" width="40" height="14" aria-label="None, black, white">
            <rect width="40" height="14" fill="#2c2c2c" />
            <rect x="1" y="1" width="12" height="12" fill="#fff" /><path d="M1.500 12.500L12.500 1.500" stroke="#d81818" stroke-width="2" />
            <rect x="14" y="1" width="12" height="12" fill="#000" /><rect x="27" y="1" width="12" height="12" fill="#fff" />
          </svg>
        </div>
        <div class="spectrum"></div>
      </div>
      <div class="foot"><span class="grip"></span></div>
    `;
  }
}

/* ---------- application shell ---------- */

@customElement("app-root")
export class AppRoot extends LitElement {
  static styles = css`
    :host {
      display: grid; grid-template-rows: 30px 34px minmax(0, 1fr) 2px; height: 100vh; overflow: hidden;
      background: #535353; font-family: Roboto, "Liberation Sans", sans-serif;
    }
    .workspace { position: relative; display: grid; grid-template-columns: 40px minmax(0, 1fr) 41px 40px; min-height: 0; }
    tool-panel { margin-right: 1px; }
    color-panel { position: absolute; top: 11px; right: 40px; width: 240px; }
    .edge { background: linear-gradient(90deg, #5a1a1e 0 75%, #8c1a20 75% 78%, #5a1a1e 78%); }
  `;

  private inner = [["swatches"], ["strokes", "guide", "transparency"], ["transform", "align", "pathfinder"], ["export"]];
  private outer = [["palette"], ["swatches", "cloud"], ["guide"], ["brushes", "strokes", "club"]];

  render() {
    return html`
      <menu-bar></menu-bar>
      <control-bar></control-bar>
      <main class="workspace">
        <tool-panel></tool-panel>
        <document-window></document-window>
        <panel-dock .groups=${this.inner}></panel-dock>
        <panel-dock .groups=${this.outer}></panel-dock>
        <color-panel></color-panel>
      </main>
      <div class="edge"></div>
    `;
  }
}
